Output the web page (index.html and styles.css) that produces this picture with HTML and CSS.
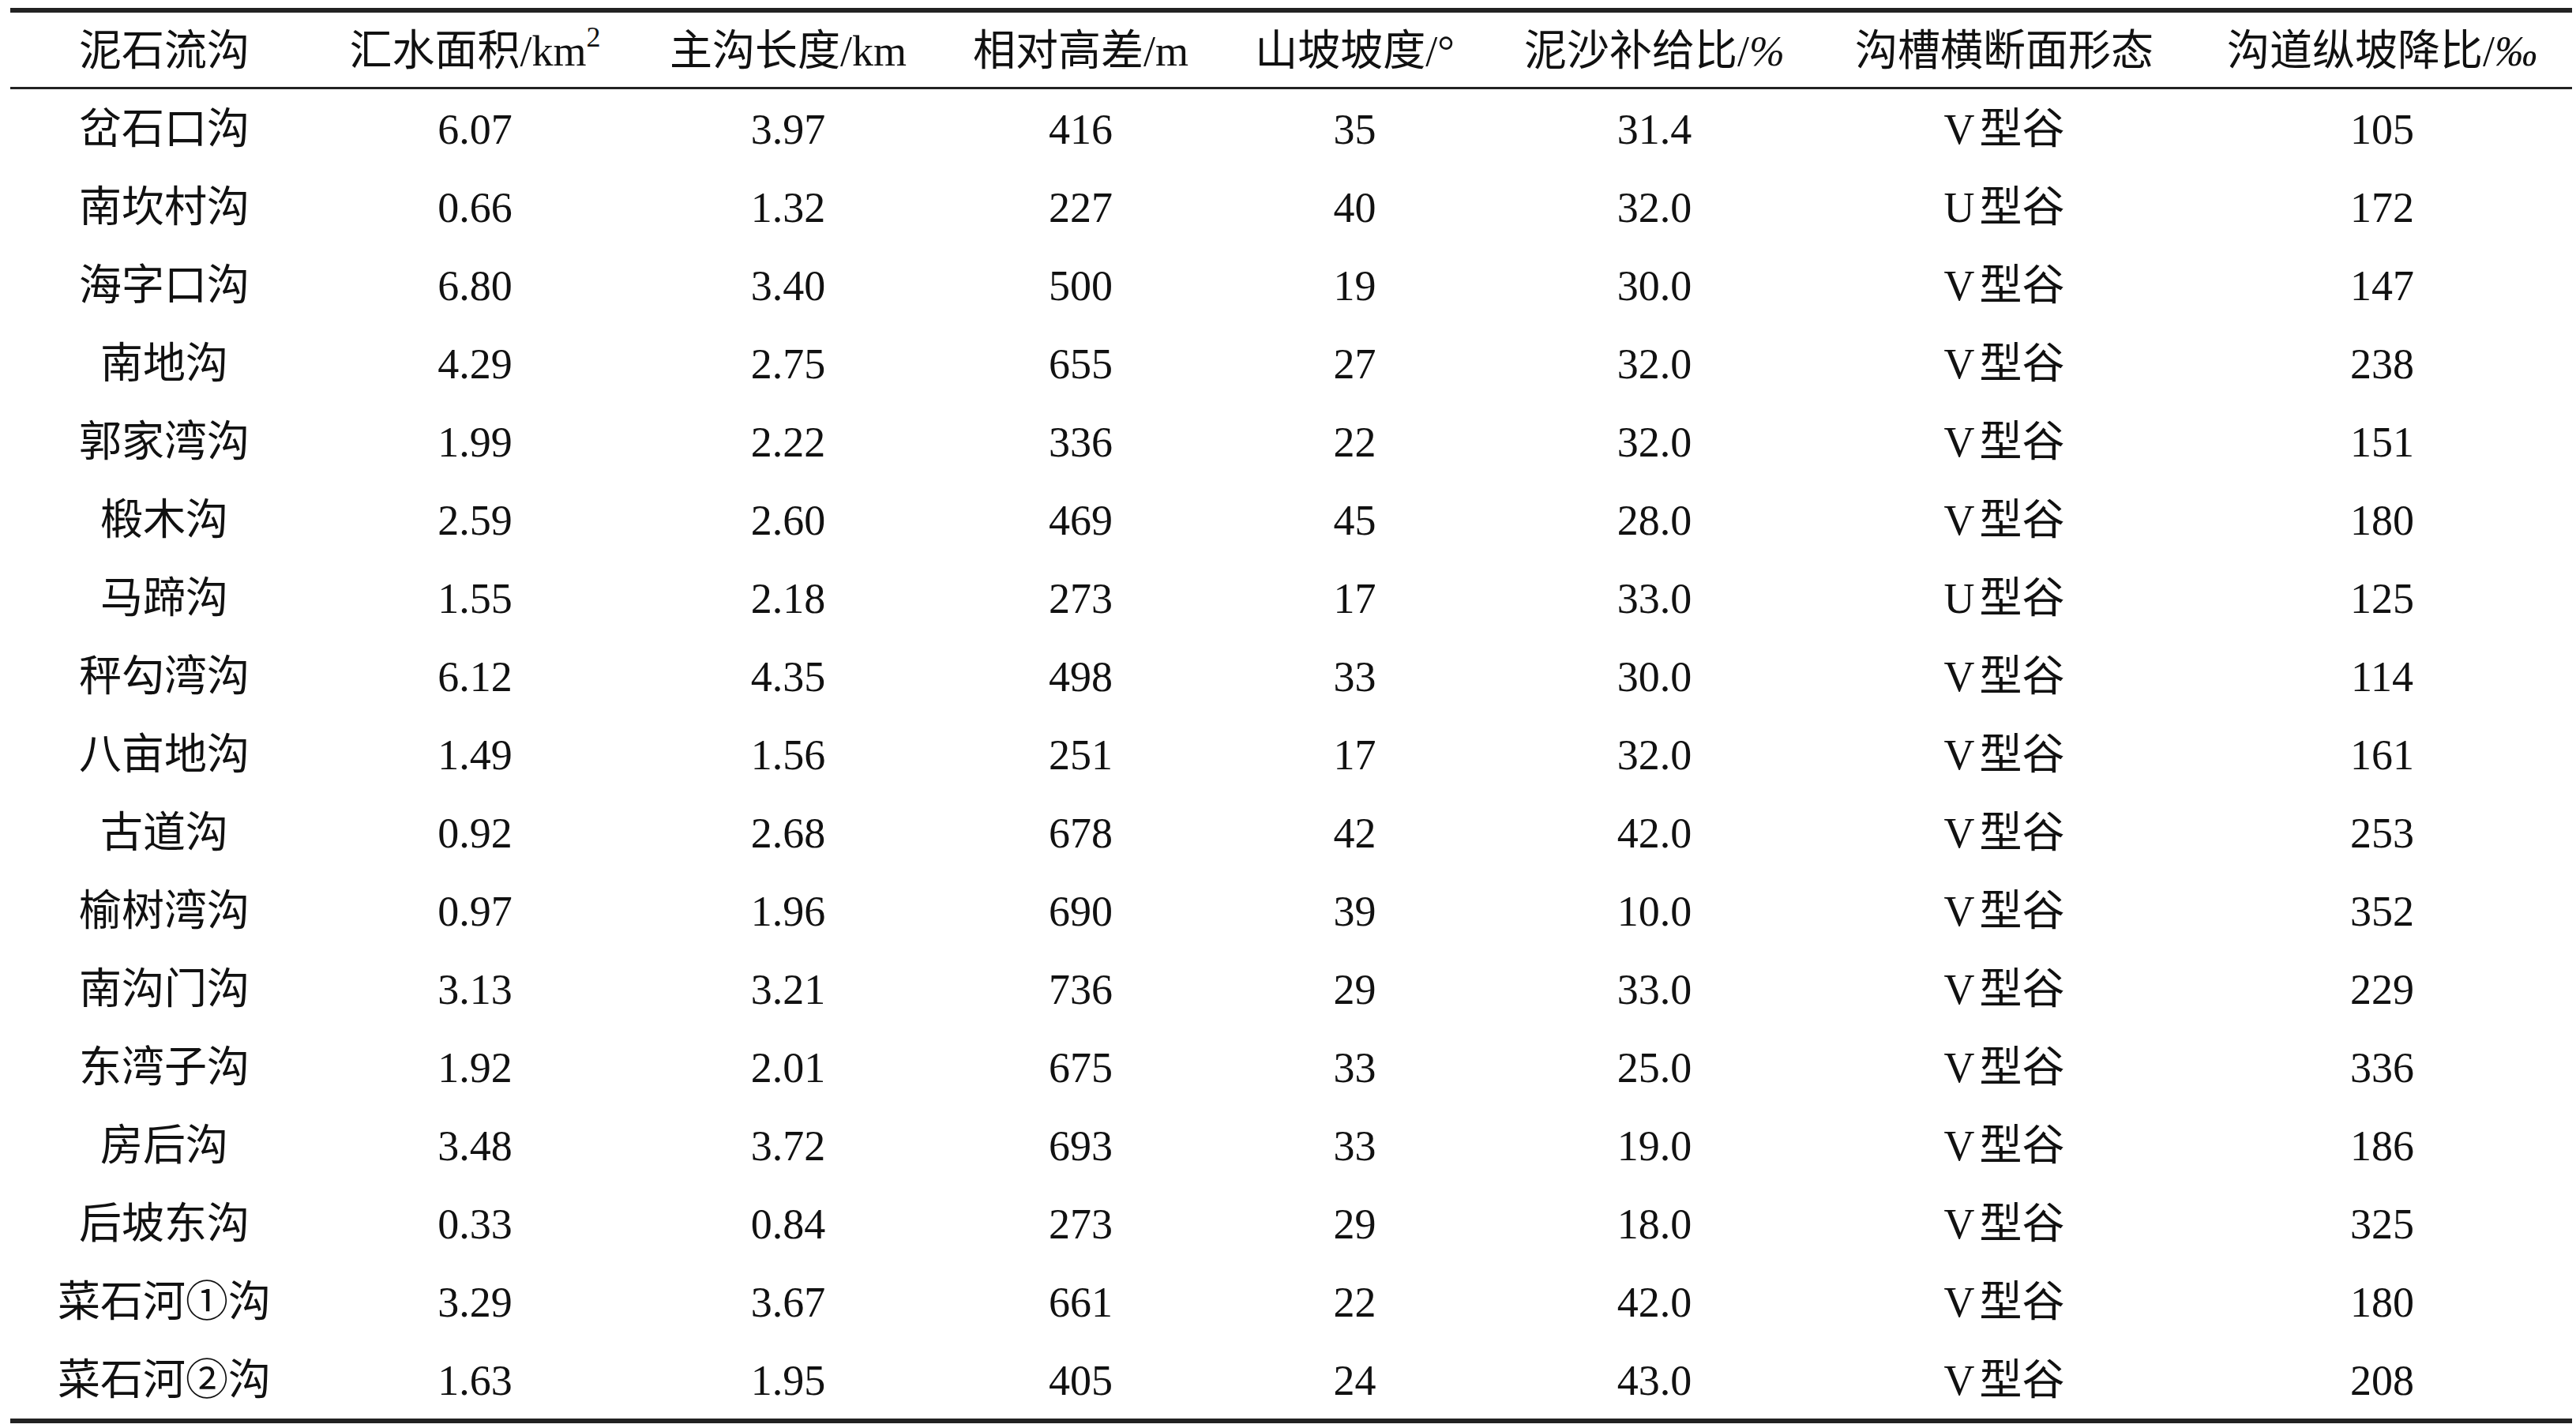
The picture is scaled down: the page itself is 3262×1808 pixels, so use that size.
FILE: index.html
```html
<!DOCTYPE html>
<html lang="zh">
<head>
<meta charset="utf-8">
<title>泥石流沟特征</title>
<link rel="stylesheet" href="styles.css">
</head>
<body>
<table class="data">
  <colgroup>
    <col class="c1"><col class="c2"><col class="c3"><col class="c4">
    <col class="c5"><col class="c6"><col class="c7"><col class="c8">
  </colgroup>
  <thead>
    <tr>
      <th>泥石流沟</th>
      <th>汇水面积/km<sup>2</sup></th>
      <th>主沟长度/km</th>
      <th>相对高差/m</th>
      <th>山坡坡度/°</th>
      <th>泥沙补给比/<span class="it">%</span></th>
      <th>沟槽横断面形态</th>
      <th>沟道纵坡降比/<span class="it">‰</span></th>
    </tr>
  </thead>
  <tbody>
    <tr><td>岔石口沟</td><td>6.07</td><td>3.97</td><td>416</td><td>35</td><td>31.4</td><td>V<span class="gap"></span>型谷</td><td>105</td></tr>
    <tr><td>南坎村沟</td><td>0.66</td><td>1.32</td><td>227</td><td>40</td><td>32.0</td><td>U<span class="gap"></span>型谷</td><td>172</td></tr>
    <tr><td>海字口沟</td><td>6.80</td><td>3.40</td><td>500</td><td>19</td><td>30.0</td><td>V<span class="gap"></span>型谷</td><td>147</td></tr>
    <tr><td>南地沟</td><td>4.29</td><td>2.75</td><td>655</td><td>27</td><td>32.0</td><td>V<span class="gap"></span>型谷</td><td>238</td></tr>
    <tr><td>郭家湾沟</td><td>1.99</td><td>2.22</td><td>336</td><td>22</td><td>32.0</td><td>V<span class="gap"></span>型谷</td><td>151</td></tr>
    <tr><td>椴木沟</td><td>2.59</td><td>2.60</td><td>469</td><td>45</td><td>28.0</td><td>V<span class="gap"></span>型谷</td><td>180</td></tr>
    <tr><td>马蹄沟</td><td>1.55</td><td>2.18</td><td>273</td><td>17</td><td>33.0</td><td>U<span class="gap"></span>型谷</td><td>125</td></tr>
    <tr><td>秤勾湾沟</td><td>6.12</td><td>4.35</td><td>498</td><td>33</td><td>30.0</td><td>V<span class="gap"></span>型谷</td><td>114</td></tr>
    <tr><td>八亩地沟</td><td>1.49</td><td>1.56</td><td>251</td><td>17</td><td>32.0</td><td>V<span class="gap"></span>型谷</td><td>161</td></tr>
    <tr><td>古道沟</td><td>0.92</td><td>2.68</td><td>678</td><td>42</td><td>42.0</td><td>V<span class="gap"></span>型谷</td><td>253</td></tr>
    <tr><td>榆树湾沟</td><td>0.97</td><td>1.96</td><td>690</td><td>39</td><td>10.0</td><td>V<span class="gap"></span>型谷</td><td>352</td></tr>
    <tr><td>南沟门沟</td><td>3.13</td><td>3.21</td><td>736</td><td>29</td><td>33.0</td><td>V<span class="gap"></span>型谷</td><td>229</td></tr>
    <tr><td>东湾子沟</td><td>1.92</td><td>2.01</td><td>675</td><td>33</td><td>25.0</td><td>V<span class="gap"></span>型谷</td><td>336</td></tr>
    <tr><td>房后沟</td><td>3.48</td><td>3.72</td><td>693</td><td>33</td><td>19.0</td><td>V<span class="gap"></span>型谷</td><td>186</td></tr>
    <tr><td>后坡东沟</td><td>0.33</td><td>0.84</td><td>273</td><td>29</td><td>18.0</td><td>V<span class="gap"></span>型谷</td><td>325</td></tr>
    <tr><td>菜石河①沟</td><td>3.29</td><td>3.67</td><td>661</td><td>22</td><td>42.0</td><td>V<span class="gap"></span>型谷</td><td>180</td></tr>
    <tr><td>菜石河②沟</td><td>1.63</td><td>1.95</td><td>405</td><td>24</td><td>43.0</td><td>V<span class="gap"></span>型谷</td><td>208</td></tr>
  </tbody>
</table>
</body>
</html>
```

FILE: styles.css
```css
html, body {
  margin: 0;
  padding: 0;
  background: #ffffff;
}

body {
  padding: 10px 5px 0 13px;
}

.data {
  width: 3244px;
  border-collapse: collapse;
  table-layout: fixed;
  font-family: "Liberation Serif", "Noto Sans CJK SC", serif;
  font-size: 54px;
  color: #111111;
  border-top: 6px solid #222222;
  border-bottom: 6px solid #222222;
}

.c1 { width: 390px; }
.c2 { width: 397px; }
.c3 { width: 396px; }
.c4 { width: 345px; }
.c5 { width: 349px; }
.c6 { width: 410px; }
.c7 { width: 476px; }
.c8 { width: 481px; }

.data th,
.data td {
  padding: 3px 0 0 0;
  text-align: center;
  vertical-align: middle;
  white-space: nowrap;
  font-weight: normal;
  line-height: 1;
}

.data thead th {
  height: 91px;
  border-bottom: 3px solid #222222;
}

.data tbody td {
  height: 96px;
}

.data sup {
  font-size: 36px;
  line-height: 0;
  vertical-align: 24px;
}

.it {
  font-style: italic;
}

.gap {
  display: inline-block;
  width: 6px;
}
```
